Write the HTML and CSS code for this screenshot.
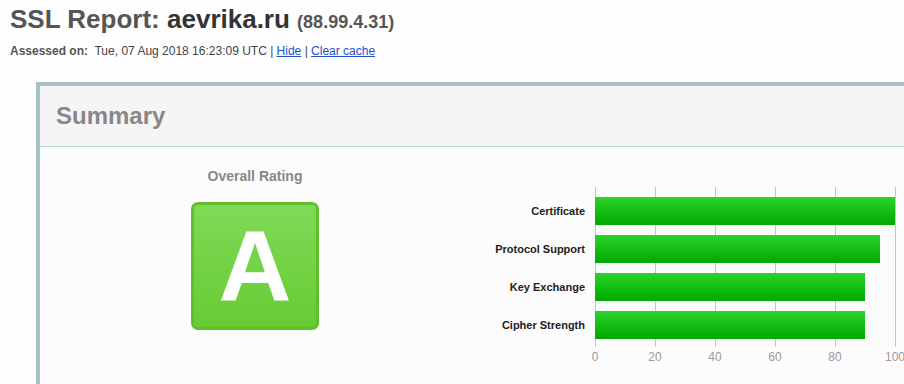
FILE: index.html
```html
<!DOCTYPE html>
<html>
<head>
<meta charset="UTF-8">
<title>SSL Report: aevrika.ru</title>
<link rel="stylesheet" href="styles.css">
</head>
<body>

<div class="reportTitle">
  <h1><span class="lead">SSL Report:</span> <span class="host">aevrika.ru</span> <span class="ip">(88.99.4.31)</span></h1>
  <div class="assessed">
    <b>Assessed on:</b>&nbsp; Tue, 07 Aug 2018 16:23:09 UTC | <a href="#">Hide</a> | <a href="#">Clear cache</a>
  </div>
</div>

<div class="sectionFrame">
  <div class="sectionTitle">Summary</div>
  <div class="sectionBody">

    <div class="ratingCol">
      <div class="ratingTitle">Overall Rating</div>
      <div class="ratingBox">A</div>
    </div>

    <div class="chart">
      <div class="chartRows">
        <div class="chartLabels">
          <div class="chartLabel">Certificate</div>
          <div class="chartLabel">Protocol Support</div>
          <div class="chartLabel">Key Exchange</div>
          <div class="chartLabel">Cipher Strength</div>
        </div>
        <div class="plot">
          <div class="bar" style="width: 300px"></div>
          <div class="bar" style="width: 285px"></div>
          <div class="bar" style="width: 270px"></div>
          <div class="bar" style="width: 270px"></div>
        </div>
      </div>
      <div class="axis">
        <span>0</span><span>20</span><span>40</span><span>60</span><span>80</span><span>100</span>
      </div>
    </div>

  </div>
</div>

</body>
</html>
```

FILE: styles.css
```css
html, body {
  margin: 0;
  padding: 0;
  overflow: hidden;
  background-color: #fefefe;
  font-family: "Liberation Sans", Arial, sans-serif;
}

.reportTitle {
  padding: 3px 0 0 10px;
}

h1 {
  margin: 0;
  font-size: 26px;
  line-height: 32px;
  font-weight: bold;
  color: #555;
}
h1 .host {
  color: #333;
}
h1 .ip {
  font-size: 18px;
  color: #555;
}

.assessed {
  margin-top: 5px;
  font-size: 12px;
  line-height: 16px;
  color: #444;
}
.assessed b {
  color: #555;
}
.assessed a {
  color: #1f4fd1;
}

.sectionFrame {
  margin: 23px 0 0 36px;
  width: 900px;
  height: 310px;
  border-top: 4px solid #a7c1c4;
  border-left: 4px solid #a7c1c4;
  background-color: #fcfcfc;
}

.sectionTitle {
  height: 60px;
  line-height: 60px;
  padding-left: 16px;
  font-size: 24px;
  font-weight: bold;
  color: #888;
  background-color: #f5f5f5;
  border-bottom: 1px solid #bccfd1;
}

.sectionBody {
  display: flex;
}

.ratingCol {
  width: 430px;
  display: flex;
  flex-direction: column;
  align-items: center;
  padding-top: 21px;
}
.ratingTitle {
  font-size: 14px;
  line-height: 16px;
  font-weight: bold;
  color: #888;
}
.ratingBox {
  margin-top: 18px;
  width: 122px;
  height: 122px;
  border: 3px solid #62bf2b;
  border-radius: 7px;
  background: linear-gradient(#80d957, #66cc33);
  color: #fff;
  font-size: 101px;
  font-weight: bold;
  line-height: 122px;
  text-align: center;
}

.chart {
  padding-top: 40px;
}
.chartRows {
  display: flex;
  gap: 10px;
}
.chartLabels {
  width: 115px;
  padding-top: 10px;
  display: flex;
  flex-direction: column;
  gap: 10px;
}
.chartLabel {
  height: 28px;
  line-height: 28px;
  text-align: right;
  font-size: 11px;
  font-weight: bold;
  color: #222;
  white-space: nowrap;
}
.plot {
  width: 301px;
  padding: 10px 0 8px 0;
  display: flex;
  flex-direction: column;
  gap: 10px;
  background: repeating-linear-gradient(to right, #c4c4c4 0 1px, transparent 1px 60px);
}
.bar {
  height: 28px;
  background: linear-gradient(#2ad42a, #00a800);
}

.axis {
  display: flex;
  margin-left: 95px;
  padding-top: 3px;
}
.axis span {
  flex: 0 0 60px;
  text-align: center;
  font-size: 12px;
  line-height: 14px;
  color: #999;
}
```
